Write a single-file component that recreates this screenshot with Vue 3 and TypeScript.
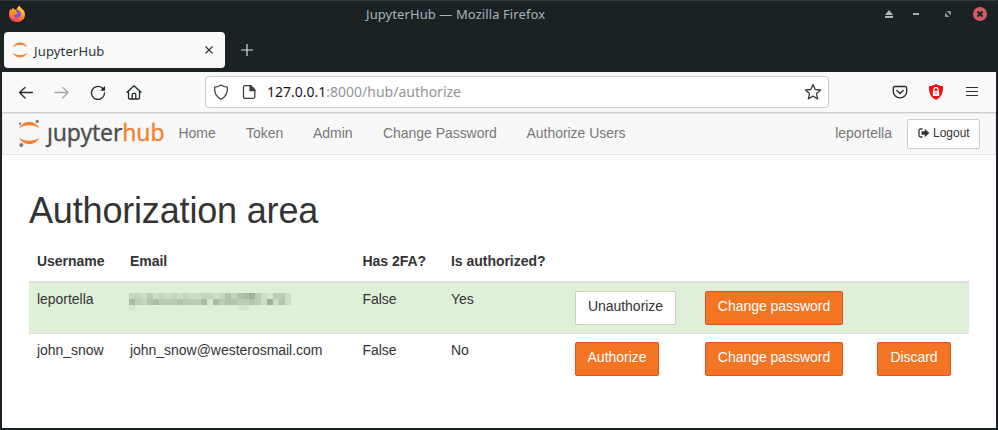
<script setup lang="ts">
interface User {
  name: string
  email: string | null
  has2fa: boolean
  authorized: boolean
}

const links: { label: string; width: number }[] = [
  { label: 'Home', width: 37.5 },
  { label: 'Token', width: 37 },
  { label: 'Admin', width: 40 },
  { label: 'Change Password', width: 113.5 },
  { label: 'Authorize Users', width: 99 },
]

const users: User[] = [
  { name: 'leportella', email: null, has2fa: false, authorized: true },
  { name: 'john_snow', email: 'john_snow@westerosmail.com', has2fa: false, authorized: false },
]

// Darkness of each block of the censored address, row after row.
const censored: number[] = [
  ...'332423232322332353567421442',
  ...'643564445444616455445427256',
  ...'100000000000000000110000000',
].map(Number)
censored[26] = 2
censored[52] = 5
censored[53] = 2
</script>

<template>
  <div class="window">
    <header class="titlebar">
      <svg class="fox" width="18" height="18" viewBox="0 0 18 18">
        <defs>
          <linearGradient id="fire" x1=".75" y1="0" x2=".3" y2="1">
            <stop offset="0" stop-color="#ffe344" />
            <stop offset=".5" stop-color="#ff9424" />
            <stop offset="1" stop-color="#f92d62" />
          </linearGradient>
        </defs>
        <path d="M11 .8c1.2 1 2 2 2.500 2.800C16 5 17 7.500 17 10c-.2 4.300-3.600 7-8 7s-8-3-8-7.300c0-2 .5-4 1.400-5.600L3.500 5 5 2.600l1 2 2.500.2C9 3.500 9.800 2 11 .8z" fill="url(#fire)" />
        <path d="M8 5.200c2.800-.8 4.900 1 4.900 3.600 0 2.500-1.700 4.100-4 4.100-2.200 0-3.700-1.300-3.900-3.200l3.500-.5 1.300-1.400C8.800 7.400 7.600 6.400 8 5.200z" fill="#8154d5" />
        <path d="M2 7c1.500-1 4-.5 6.800.7L8 9.500 5.300 10c.2 2 1.400 2.700 2.500 2.600C5 13.500 2 11 2 7z" fill="#ff8b22" />
      </svg>
      <div class="window-title">JupyterHub — Mozilla Firefox</div>
      <div class="controls">
        <svg width="10" height="10" viewBox="0 0 10 10" fill="#a9bcbd"><path d="M1 6l4-5 4 5zM1 7h8v2H1z" /></svg>
        <svg width="8" height="10" viewBox="0 0 8 10"><path d="M1 4h6v2H1z" fill="#a9b1b1" /></svg>
        <svg width="8" height="8" viewBox="0 0 8 8" fill="#8c9696"><path d="M2.500 1H7v4.500zM1 2.500V7h4.500z" /></svg>
        <svg width="14" height="14" viewBox="0 0 14 14"><circle cx="7" cy="7" r="7" fill="#d15b64" /><path d="M4.500 4.500l5 5m0-5l-5 5" stroke="#1b2224" stroke-width="2" /></svg>
      </div>
    </header>

    <div class="tabs">
      <div class="tab">
        <svg width="16" height="16" viewBox="0 0 16 16" fill="#f68132"><path d="M.5 5.500C2 2 5 .4 8 .4s6 1.600 7.500 5.100C13.500 3.600 11 3 8 3s-5.500.6-7.500 2.500zM.5 10.500C2 14 5 15.600 8 15.600s6-1.600 7.500-5.100C13.500 12.400 11 13 8 13s-5.500-.6-7.500-2.500z" /></svg>
        <span class="tab-name">JupyterHub</span>
        <svg width="8" height="8" viewBox="0 0 8 8"><path d="M.5.5l7 7m0-7l-7 7" stroke="#2c3334" stroke-width="1.100" /></svg>
      </div>
      <svg class="plus" width="12" height="12" viewBox="0 0 12 12"><path d="M6 0v12M0 6h12" stroke="#dadddd" stroke-width="1.200" /></svg>
    </div>

    <div class="toolbar">
      <div class="nav-icons">
        <svg width="16" height="16" viewBox="0 0 16 16" class="line"><path d="M14.500 8.500h-13M7 3.500l-5.500 5L7 14" /></svg>
        <svg width="16" height="16" viewBox="0 0 16 16" class="line faded"><path d="M1 8.500h13M8.800 3.500l5.200 5-5.200 5.500" /></svg>
        <svg width="16" height="16" viewBox="0 0 16 16" class="line"><path d="M14.500 9A6.500 6.500 0 1 1 12 3.800l1.500 1.200" /><path d="M15 2v4.800h-4.800z" fill="#22292b" stroke="none" /></svg>
        <svg width="16" height="16" viewBox="0 0 16 16" class="line"><path d="M1 8.300l7-6.600 7 6.600M2.500 7.200v6.600q0 1.200 1.200 1.200h8.600q1.200 0 1.200-1.200V7.200M6.200 15v-4.500q0-1.200 1.200-1.200h1.200q1.200 0 1.200 1.200V15" /></svg>
      </div>
      <div class="urlbar">
        <svg width="16" height="16" viewBox="0 0 16 16" class="line dim"><path d="M8 .9c1.700 1.300 4 2 6.400 2.200.4 5-1.200 9.600-6.400 12C2.800 12.700 1.200 8.100 1.600 3.100 4 2.900 6.300 2.200 8 .9z" /></svg>
        <svg width="16" height="16" viewBox="0 0 16 16" class="line dim"><path d="M3.500 1.700h6.300l4 4v7.100q0 1.500-1.500 1.500H4q-1.500 0-1.500-1.500V3.200q0-1.500 1-1.500z" /><path d="M9 1.500V6.500h5z" fill="#3d4243" /></svg>
        <div class="url"><b>127.0.0.1</b>:8000/hub/authorize</div>
        <svg width="18" height="18" viewBox="0 0 18 18" class="line dim"><path d="M9 1.500l2.200 5 5.400.5-4.100 3.600 1.200 5.300L9 13.100l-4.700 2.800 1.200-5.300L1.400 7l5.400-.5z" /></svg>
      </div>
      <div class="tools">
        <svg width="16" height="16" viewBox="0 0 16 16" class="line"><path d="M2.800 2.500h10.400q1.500 0 1.500 1.500v3.500a6.700 6.300 0 0 1-13.400 0V4q0-1.500 1.500-1.500z" /><path d="M4.800 6.500L8 9.500l3.200-3" /></svg>
        <svg width="16" height="16" viewBox="0 0 16 16"><path d="M8 0c2 1.300 4.500 2 7 2.100.4 6-1.300 11.300-7 13.900C2.300 13.400.6 8.100 1 2.100 3.500 2 6 1.300 8 0z" fill="#f30d12" /><rect x="4.800" y="7" width="6.400" height="5" rx=".6" fill="#fff" /><path d="M6 7.200V5.700a2 2 0 0 1 4 0v1.500" fill="none" stroke="#fff" stroke-width="1.300" /><path d="M8 8.300v2" stroke="#f30d12" /></svg>
        <svg width="16" height="12" viewBox="0 0 16 12"><path d="M2 1.500h12M2 5.500h12M2 9.500h12" stroke="#2b3233" stroke-width="1.200" /></svg>
      </div>
    </div>

    <nav class="navbar">
      <div class="brand">
        <svg width="24" height="30" viewBox="0 0 24 30">
          <path d="M1 9.500C3.500 4.800 7 3 11.200 3S19 4.800 21.500 9.500C18.500 7.200 15 6.200 11.200 6.200S4 7.200 1 9.500zM1 18.500c2.500 4.700 6 6.700 10.200 6.700S19 23.200 21.500 18.500c-3 2.300-6.500 3.300-10.300 3.300S4 20.800 1 18.500z" fill="#f57f2c" />
          <g fill="#7b7b7b"><circle cx="19.200" cy="2.400" r="1.700" /><circle cx="2" cy="4.800" r="1.200" /><circle cx="3.300" cy="26" r="2.100" /></g>
        </svg>
        <span class="wordmark">ȷupyter<b>hub</b></span>
      </div>
      <div class="links">
        <a v-for="link in links" :key="link.label" :style="{ width: link.width + 'px' }">{{ link.label }}</a>
      </div>
      <span class="me">leportella</span>
      <button class="logout">
        <svg width="12" height="10" viewBox="0 0 12 10"><path d="M4.500 1H2.500Q1 1 1 2.500v5Q1 9 2.500 9h2" fill="none" stroke="#333" stroke-width="1.300" /><path d="M3.500 3.300h3.300V.8L11.300 5 6.800 9.200V6.700H3.500z" fill="#333" /></svg>
        <span>Logout</span>
      </button>
    </nav>

    <main>
      <h1>Authorization area</h1>
      <div class="table">
        <div class="row head">
          <div>Username</div>
          <div>Email</div>
          <div>Has 2FA?</div>
          <div>Is authorized?</div>
        </div>
        <div v-for="user in users" :key="user.name" class="row" :class="{ success: user.authorized }">
          <div>{{ user.name }}</div>
          <div>
            <template v-if="user.email">{{ user.email }}</template>
            <div v-else class="mosaic">
              <i v-for="(level, i) in censored" :key="i" :style="{ opacity: level / 10 }"></i>
            </div>
          </div>
          <div>{{ user.has2fa ? 'True' : 'False' }}</div>
          <div>{{ user.authorized ? 'Yes' : 'No' }}</div>
          <div>
            <button class="btn" :class="user.authorized ? 'revoke' : 'primary grant'">{{ user.authorized ? 'Unauthorize' : 'Authorize' }}</button>
          </div>
          <div><button class="btn primary change">Change password</button></div>
          <div><button v-if="!user.authorized" class="btn primary discard">Discard</button></div>
        </div>
      </div>
    </main>
  </div>
</template>

<style>
body {
  margin: 0;
  overflow: hidden;
}
</style>

<style scoped>
* {
  box-sizing: border-box;
}
svg {
  display: block;
  flex: none;
}
.window {
  width: 998px;
  height: 430px;
  background: #fff;
  border: 2px solid #1b2224;
  border-top: 1px solid #343b3d;
  font: 14px/20px "Liberation Sans", Arial, sans-serif;
  color: #333;
}
.titlebar {
  height: 27px;
  background: #1b2224;
  display: flex;
  align-items: center;
  padding: 0 9px 2px 6px;
}
.window-title {
  flex: 1;
  margin-left: 340px;
  font: 13px/20px "Noto Sans", sans-serif;
  letter-spacing: 0.09px;
  color: #a9b2bd;
  white-space: nowrap;
}
.controls {
  display: flex;
  align-items: center;
}
.controls svg:nth-child(2) {
  margin-left: 18px;
}
.controls svg:nth-child(3) {
  margin-left: 24px;
}
.controls svg:nth-child(4) {
  margin-left: 21px;
}
.tabs {
  height: 44px;
  padding: 4px 0 4px 2px;
  background: #1b2224;
  display: flex;
  align-items: center;
}
.tab {
  width: 221px;
  height: 36px;
  padding: 0 12px 0 8px;
  border-radius: 4px;
  background: #f9f9fa;
  display: flex;
  align-items: center;
}
.tab-name {
  flex: 1;
  margin: 2px 0 0 6px;
  font: 13px/20px "Noto Sans", sans-serif;
  letter-spacing: 0.15px;
  color: #2b3335;
}
.plus {
  margin-left: 15.5px;
}
.toolbar {
  height: 41px;
  background: #f9f9fa;
  border-bottom: 1px solid #ccc;
  display: flex;
  align-items: center;
}
.nav-icons {
  display: flex;
  gap: 20px;
  margin-left: 16px;
  width: 187px;
}
.line {
  fill: none;
  stroke: #22292b;
  stroke-width: 1.3;
  stroke-linecap: round;
  stroke-linejoin: round;
}
.faded {
  stroke: #a6a9aa;
}
.dim {
  stroke: #3d4243;
}
.urlbar {
  width: 624px;
  height: 32px;
  padding: 0 6px 0 7px;
  border: 1px solid #ccc;
  border-radius: 4px;
  background: #fff;
  display: flex;
  align-items: center;
}
.urlbar svg:nth-child(2) {
  margin-left: 12px;
}
.url {
  flex: 1;
  margin-left: 10px;
  font: 14px/20px "Noto Sans", sans-serif;
  color: #929596;
}
.url b {
  font-weight: 400;
  color: #15191a;
}
.tools {
  display: flex;
  align-items: center;
  gap: 20px;
  margin-left: 63px;
}
.navbar {
  height: 42px;
  background: #f8f8f8;
  border: 1px solid #e7e7e7;
  display: flex;
  align-items: center;
  padding: 0 15px;
  color: #777;
}
.brand {
  width: 148px;
  height: 30px;
  display: flex;
}
.wordmark {
  margin-left: 5px;
  font: 23px/26px "Noto Sans", sans-serif;
  letter-spacing: -0.15px;
  -webkit-text-stroke: 0.3px currentColor;
  color: #4e4e4e;
}
.wordmark b {
  font-weight: 400;
  color: #f57f2c;
}
.links {
  flex: 1;
  display: flex;
  gap: 30px;
  margin-left: 12.5px;
  padding-bottom: 2px;
  letter-spacing: -0.04px;
  white-space: nowrap;
}
.me {
  padding-bottom: 2px;
}
.logout {
  width: 73px;
  height: 30px;
  margin-left: 15px;
  padding: 0 0 2px 10px;
  border: 1px solid #ccc;
  border-radius: 2px;
  background: #fff;
  color: #333;
  font: 12px/18px "Liberation Sans", sans-serif;
  display: flex;
  align-items: center;
  gap: 3px;
}
main {
  padding: 36px 27px 0;
}
h1 {
  margin: 0 0 10px;
  font-size: 36px;
  line-height: 40px;
  font-weight: 400;
  letter-spacing: -0.17px;
}
.row {
  display: grid;
  grid-template-columns: 93px 232.5px 88.5px 124px 130px 172px 100px;
  height: 51px;
  padding-top: 6px;
  border-top: 1px solid #ddd;
}
.row > div {
  padding-left: 8px;
  letter-spacing: -0.03px;
  white-space: nowrap;
}
.head {
  height: 40px;
  padding-top: 10px;
  border-top: 0;
  font-weight: 700;
}
.success {
  height: 52px;
  border-top-width: 2px;
  background: #dff0d8;
}
.btn {
  display: block;
  height: 34px;
  margin-top: 2px;
  padding: 0 0 4px;
  border: 1px solid #ccc;
  border-radius: 2px;
  background: #fff;
  color: #333;
  font: 14px/20px "Liberation Sans", sans-serif;
  letter-spacing: -0.03px;
}
.primary {
  background: #f37524;
  border-color: #e34f21;
  color: #fff;
}
.revoke {
  width: 101px;
}
.grant {
  width: 84px;
}
.change {
  width: 138px;
}
.discard {
  width: 74px;
}
.mosaic {
  display: grid;
  grid-template-columns: repeat(27, 6px);
  grid-template-rows: 6px 6px 5px;
  margin: 4px 0 0 -1px;
}
.mosaic i {
  background: #889681;
}
</style>
